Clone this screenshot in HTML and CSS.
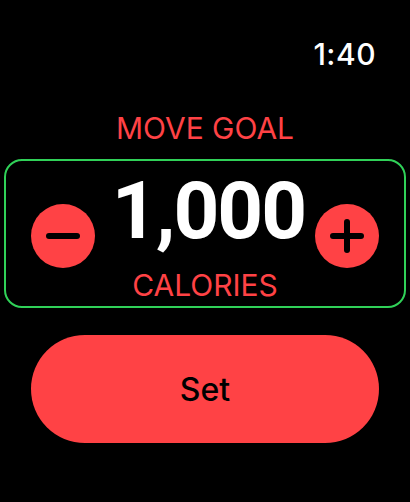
FILE: index.html
```html
<!DOCTYPE html>
<html>
<head>
<meta charset="utf-8">
<link rel="stylesheet" href="styles.css">
</head>
<body>
<div class="screen">
  <div class="status"><span class="time">1:40</span></div>
  <div class="title">MOVE GOAL</div>
  <div class="goal-box">
    <button class="round-btn" aria-label="Decrease">
      <svg width="64" height="64" viewBox="0 0 64 64"><line x1="18" y1="32" x2="46" y2="32" stroke="#000" stroke-width="6" stroke-linecap="round"/></svg>
    </button>
    <div class="value">
      <div class="number">1,000</div>
      <div class="unit">CALORIES</div>
    </div>
    <button class="round-btn" aria-label="Increase">
      <svg width="64" height="64" viewBox="0 0 64 64"><line x1="18" y1="32" x2="46" y2="32" stroke="#000" stroke-width="6" stroke-linecap="round"/><line x1="32" y1="18" x2="32" y2="46" stroke="#000" stroke-width="6" stroke-linecap="round"/></svg>
    </button>
  </div>
  <button class="set-btn">Set</button>
</div>
</body>
</html>
```

FILE: styles.css
```css
html, body {
  margin: 0;
  padding: 0;
  background: #000;
}
body {
  width: 410px;
  height: 502px;
  overflow: hidden;
  font-family: Inter, "Liberation Sans", sans-serif;
}
.screen {
  display: flex;
  flex-direction: column;
}
.status {
  display: flex;
  justify-content: flex-end;
  padding: 40px 34px 0 0;
}
.time {
  color: #fff;
  font-size: 30px;
  line-height: 29px;
  font-weight: 500;
  letter-spacing: 0.5px;
}
.title {
  margin-top: 44px;
  text-align: center;
  color: #ff4245;
  font-size: 30px;
  line-height: 30px;
  font-weight: 400;
}
.goal-box {
  margin: 16px 4px 0;
  border: 2px solid #30d158;
  border-radius: 18px;
  padding: 10px 25px 6px;
  display: grid;
  grid-template-columns: 64px 1fr 64px;
  align-items: center;
}
.round-btn {
  width: 64px;
  height: 64px;
  border-radius: 50%;
  background: #ff4245;
  border: 0;
  padding: 0;
  display: flex;
  align-items: center;
  justify-content: center;
}
.round-btn svg {
  display: block;
}
.value {
  display: flex;
  flex-direction: column;
  align-items: center;
}
.number {
  color: #fff;
  font-family: Roboto, Inter, sans-serif;
  font-size: 80px;
  line-height: 80px;
  font-weight: 700;
  letter-spacing: -2px;
  padding-left: 7px;
}
.unit {
  margin-top: 19px;
  color: #ff4245;
  font-size: 30px;
  line-height: 30px;
  font-weight: 400;
}
.set-btn {
  margin: 27px 31px 0;
  height: 108px;
  border: 0;
  border-radius: 54px;
  background: #ff4245;
  color: #000;
  font-family: Inter, "Liberation Sans", sans-serif;
  font-size: 32px;
  font-weight: 500;
}
```
